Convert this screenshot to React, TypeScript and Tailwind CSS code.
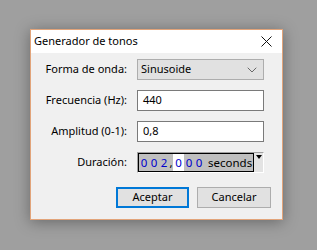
import { ChevronDown } from "lucide-react";

const rows = [
  { label: "Forma de onda:", kind: "select", value: "Sinusoide" },
  { label: "Frecuencia (Hz):", kind: "input", value: "440" },
  { label: "Amplitud (0-1):", kind: "input", value: "0,8" },
];

function DurationCtrl() {
  return (
    <div className="flex h-[21px] w-[127px] border border-t-[#a0a0a0] border-l-[#a0a0a0] border-b-white border-r-white">
      <div className="flex flex-1 items-center border border-black bg-[#bfbfbf] text-[11.5px] leading-none">
        <span className="w-[10px] text-center text-[#0000cc]">0</span>
        <span className="w-[10px] text-center text-[#0000cc]">0</span>
        <span className="w-[10px] text-center text-[#0000cc]">2</span>
        <span className="w-[4px] text-center text-black">,</span>
        <span className="flex h-full w-[11px] items-center justify-center bg-white text-[#0000cc]">0</span>
        <span className="w-[10px] text-center text-[#0000cc]">0</span>
        <span className="w-[10px] text-center text-[#0000cc]">0</span>
        <span className="ml-[4px] text-black">seconds</span>
      </div>
      <div className="flex w-[9px] justify-center bg-[#e3e3e3] pt-[2px]">
        <div className="h-0 w-0 border-x-[3px] border-t-[4px] border-x-transparent border-t-black" />
      </div>
    </div>
  );
}

export default function App() {
  return (
    <div className="h-[250px] w-[317px] bg-[#9f9f9f] pl-[30px] pt-[29px] font-['Noto_Sans',sans-serif] text-[11px] text-black">
      <div className="flex h-[191px] w-[253px] flex-col border border-[#e2a47a] bg-[#f0f0f0] shadow-[0_2px_14px_rgba(0,0,0,0.35)]">
        {/* Title bar */}
        <div className="flex h-[23px] items-center justify-between bg-white pl-[3px] pr-[10px]">
          <span>Generador de tonos</span>
          <svg width="11" height="11" viewBox="0 0 11 11" className="mt-[-1px]">
            <path d="M0.5 0.5 L10.5 10.5 M10.5 0.5 L0.5 10.5" stroke="#111" strokeWidth="1" fill="none" />
          </svg>
        </div>

        {/* Form */}
        <div className="grid grid-cols-[96px_127px] gap-x-[10px] gap-y-[10px] pt-[6px]">
          {rows.map((row) => (
            <div key={row.label} className="contents">
              <div className="flex h-[21px] items-center justify-end">{row.label}</div>
              {row.kind === "select" ? (
                <div className="flex h-[21px] items-center justify-between border border-[#adadad] bg-[#e1e1e1] pl-[3px] pr-[3px]">
                  <span>{row.value}</span>
                  <ChevronDown className="h-[16px] w-[16px] text-[#555]" strokeWidth={1.3} />
                </div>
              ) : (
                <div className="flex h-[21px] items-center border border-[#7a7a7a] bg-white pl-[5px]">
                  {row.value}
                </div>
              )}
            </div>
          ))}
          <div className="flex h-[21px] items-center justify-end">Duración:</div>
          <DurationCtrl />
        </div>

        {/* Buttons */}
        <div className="mt-[14px] flex justify-end gap-[8px] pr-[11px]">
          <button className="h-[21px] w-[73px] border-2 border-[#0078d7] bg-[#e1e1e1]">Aceptar</button>
          <button className="h-[21px] w-[74px] border border-[#adadad] bg-[#e1e1e1]">Cancelar</button>
        </div>
      </div>
    </div>
  );
}
